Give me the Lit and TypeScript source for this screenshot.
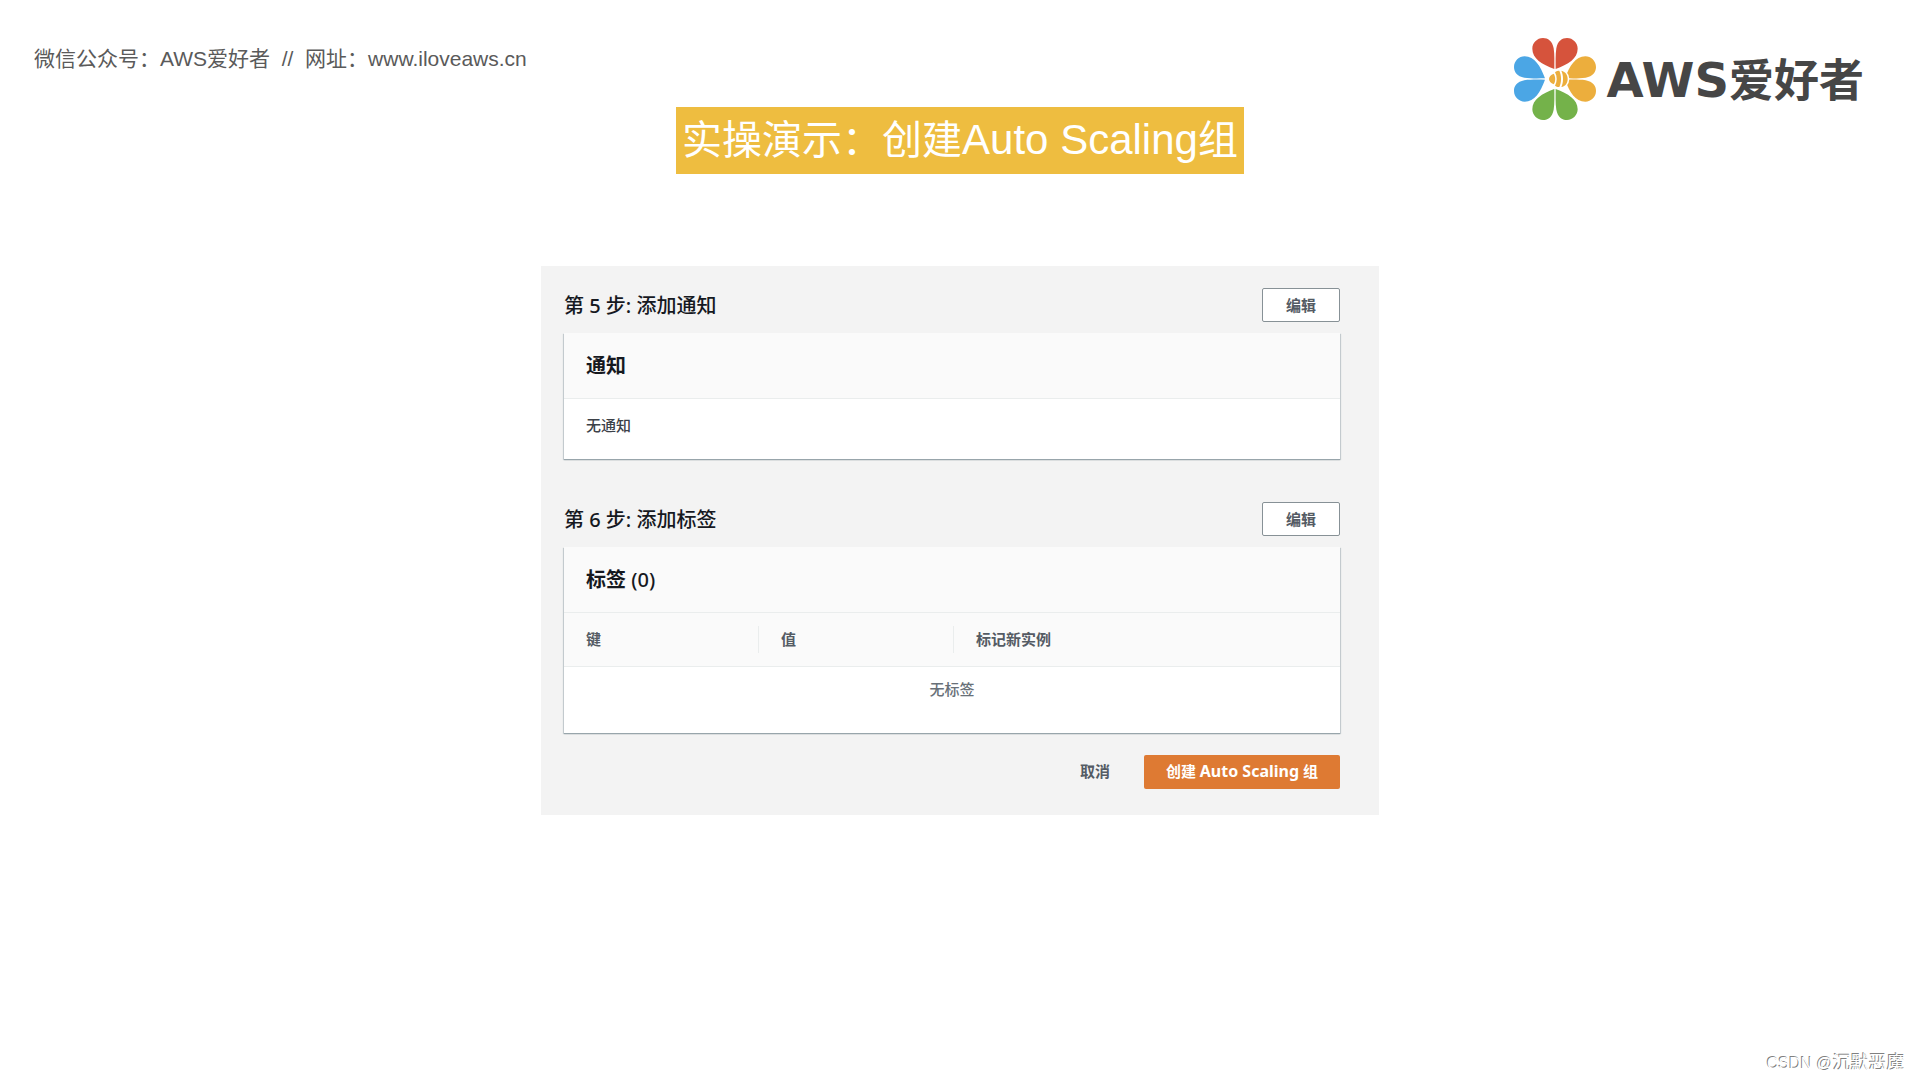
import { LitElement, html, css, svg } from "lit";
import { customElement, property } from "lit/decorators.js";

@customElement("brand-logo")
export class BrandLogo extends LitElement {
  static styles = css`
    :host {
      display: flex;
      align-items: center;
      gap: 10px;
      color: #464646;
    }
    .flower {
      width: 82px;
      height: 82px;
      display: block;
    }
    .name {
      display: flex;
      align-items: baseline;
      line-height: 56px;
      white-space: nowrap;
      font-weight: 700;
    }
    .latin {
      font-family: "DejaVu Sans", Verdana, sans-serif;
      font-size: 48px;
    }
    .han {
      font-family: "Noto Sans CJK SC", sans-serif;
      font-size: 45px;
    }
  `;

  private pair(color: string, angle: number) {
    const petal =
      "M149 117 C149 98 150 74 147 55 C143 33 130 24 115 24 C97 24 83 39 83 56 C83 86 112 103 149 117 Z";
    return svg`
      <g fill=${color} transform="rotate(${angle} 151 147)">
        <path d=${petal}></path>
        <path d=${petal} transform="translate(302 0) scale(-1 1)"></path>
      </g>`;
  }

  render() {
    return html`
      <svg class="flower" viewBox="28 24 246 246" aria-hidden="true">
        ${this.pair("#d6533c", 0)} ${this.pair("#ecae3d", 90)}
        ${this.pair("#74b24a", 180)} ${this.pair("#4ba6e5", 270)}
        <circle cx="163" cy="147" r="31" fill="#ffffff"></circle>
        <g fill="#ecae3d">
          <path d="M147 131 C153 139 153 155 147 163 C138 160 133 153 133 147 C133 141 138 134 147 131 Z"></path>
          <path d="M151 127 C155 123 160 122 164 122 C171 137 171 157 164 171 C160 172 155 170 151 167 C158 154 158 140 151 127 Z"></path>
          <path d="M170 122 C183 125 189 135 189 147 C189 159 183 169 170 171 C177 157 177 137 170 122 Z"></path>
        </g>
      </svg>
      <div class="name"><span class="latin">AWS</span><span class="han">爱好者</span></div>
    `;
  }
}

@customElement("review-step")
export class ReviewStep extends LitElement {
  @property() heading = "";
  @property() cardTitle = "";
  @property() counter = "";

  static styles = css`
    :host {
      display: block;
    }
    .bar {
      display: flex;
      align-items: center;
      justify-content: space-between;
      height: 34px;
      margin-bottom: 11px;
    }
    h2,
    h3 {
      margin: 0;
      font-size: 20px;
      line-height: 28px;
      color: #16191f;
    }
    h2 {
      padding-top: 2px;
      font-weight: 500;
    }
    h3 {
      font-weight: 700;
      padding: 19px 22px 18px;
      background: #fafafa;
      border-bottom: 1px solid #eaeded;
    }
    .counter {
      font-weight: 500;
    }
    .edit {
      box-sizing: border-box;
      height: 34px;
      padding: 0 23px 2px;
      font: inherit;
      font-size: 15px;
      font-weight: 700;
      color: #545b64;
      background: #ffffff;
      border: 1px solid #879196;
      border-radius: 2px;
    }
    .card {
      background: #ffffff;
      box-shadow:
        0 1px 1px 0 #98a5ab,
        1px 1px 1px 0 #ccd2d5,
        -1px 1px 1px 0 #ccd2d5;
    }
  `;

  render() {
    return html`
      <div class="bar">
        <h2>${this.heading}</h2>
        <button class="edit" type="button">编辑</button>
      </div>
      <section class="card">
        <h3>${this.cardTitle} <span class="counter">${this.counter}</span></h3>
        <slot></slot>
      </section>
    `;
  }
}

@customElement("app-root")
export class AppRoot extends LitElement {
  static styles = css`
    :host {
      display: block;
      position: relative;
      min-height: 100vh;
      background: #ffffff;
      font-family: "Noto Sans", "Noto Sans CJK SC", sans-serif;
    }
    .top {
      display: flex;
      justify-content: space-between;
      align-items: flex-start;
      padding: 38px 56px 0 34px;
    }
    .contact {
      margin: 7px 0 0;
      font-family: "Liberation Sans", "Noto Sans CJK SC", sans-serif;
      font-size: 21px;
      line-height: 28px;
      color: #5a5a5a;
      white-space: pre;
    }
    .title {
      width: fit-content;
      margin: -13px auto 0;
      padding: 0 6px;
      font-family: "Liberation Sans", "Noto Sans CJK SC", sans-serif;
      font-weight: 400;
      font-size: 40px;
      line-height: 67px;
      color: #ffffff;
      background: #eebd40;
      white-space: nowrap;
    }
    .title-latin {
      font-size: 42px;
      line-height: 60px;
    }
    .panel {
      box-sizing: border-box;
      width: fit-content;
      margin: 92px auto 0;
      padding: 22px 39px 26px 23px;
      background: #f3f3f3;
    }
    .steps {
      display: grid;
      grid-template-columns: 776px;
      gap: 43px;
    }
    .note {
      margin: 0;
      padding: 15px 22px 23px;
      font-size: 15px;
      font-weight: 500;
      line-height: 22px;
      color: #3c4148;
    }
    .tags {
      width: 100%;
      border-collapse: collapse;
      table-layout: fixed;
      font-size: 15px;
      line-height: 27px;
    }
    .tags th {
      padding: 13px 0;
      text-align: left;
      font-weight: 700;
      color: #545b64;
      background: #fafafa;
      border-bottom: 1px solid #eaeded;
    }
    .narrow {
      width: 195px;
    }
    .label {
      display: block;
      padding-left: 22px;
    }
    .ruled {
      border-right: 1px solid #eaeded;
    }
    .tags td {
      padding: 11px 0 33px;
      font-weight: 500;
      line-height: 22px;
      text-align: center;
      color: #687078;
    }
    .actions {
      display: flex;
      justify-content: flex-end;
      gap: 12px;
      margin-top: 22px;
    }
    .action {
      height: 34px;
      padding: 0 22px 2px;
      font: inherit;
      font-size: 15px;
      font-weight: 700;
      line-height: 22px;
      color: #545b64;
      background: none;
      border: 0;
      border-radius: 2px;
    }
    .primary {
      color: #ffffff;
      background: #de7a33;
    }
    .product {
      font-size: 16px;
    }
    .watermark {
      position: absolute;
      right: 15px;
      bottom: 4px;
      font-family: "Liberation Sans", "Noto Sans CJK SC", sans-serif;
      font-size: 16px;
      line-height: 24px;
      color: #ffffff;
      text-shadow: -1px -1px 0 #808080;
    }
    .author {
      font-size: 18px;
    }
  `;

  render() {
    return html`
      <header class="top">
        <p class="contact">微信公众号：AWS爱好者  //  网址：www.iloveaws.cn</p>
        <brand-logo></brand-logo>
      </header>
      <main>
        <h1 class="title">实操演示：创建<span class="title-latin">Auto Scaling</span>组</h1>
        <div class="panel">
          <div class="steps">
            <review-step heading="第 5 步: 添加通知" .cardTitle=${"通知"}>
              <p class="note">无通知</p>
            </review-step>
            <review-step heading="第 6 步: 添加标签" .cardTitle=${"标签"} counter="(0)">
              <table class="tags">
                <thead>
                  <tr>
                    <th class="narrow" scope="col"><span class="label ruled">键</span></th>
                    <th class="narrow" scope="col"><span class="label ruled">值</span></th>
                    <th scope="col"><span class="label">标记新实例</span></th>
                  </tr>
                </thead>
                <tbody>
                  <tr>
                    <td colspan="3">无标签</td>
                  </tr>
                </tbody>
              </table>
            </review-step>
          </div>
          <div class="actions">
            <button class="action" type="button">取消</button>
            <button class="action primary" type="button">创建 <span class="product">Auto Scaling</span> 组</button>
          </div>
        </div>
      </main>
      <div class="watermark">CSDN @<span class="author">沉默恶魔</span></div>
    `;
  }
}
